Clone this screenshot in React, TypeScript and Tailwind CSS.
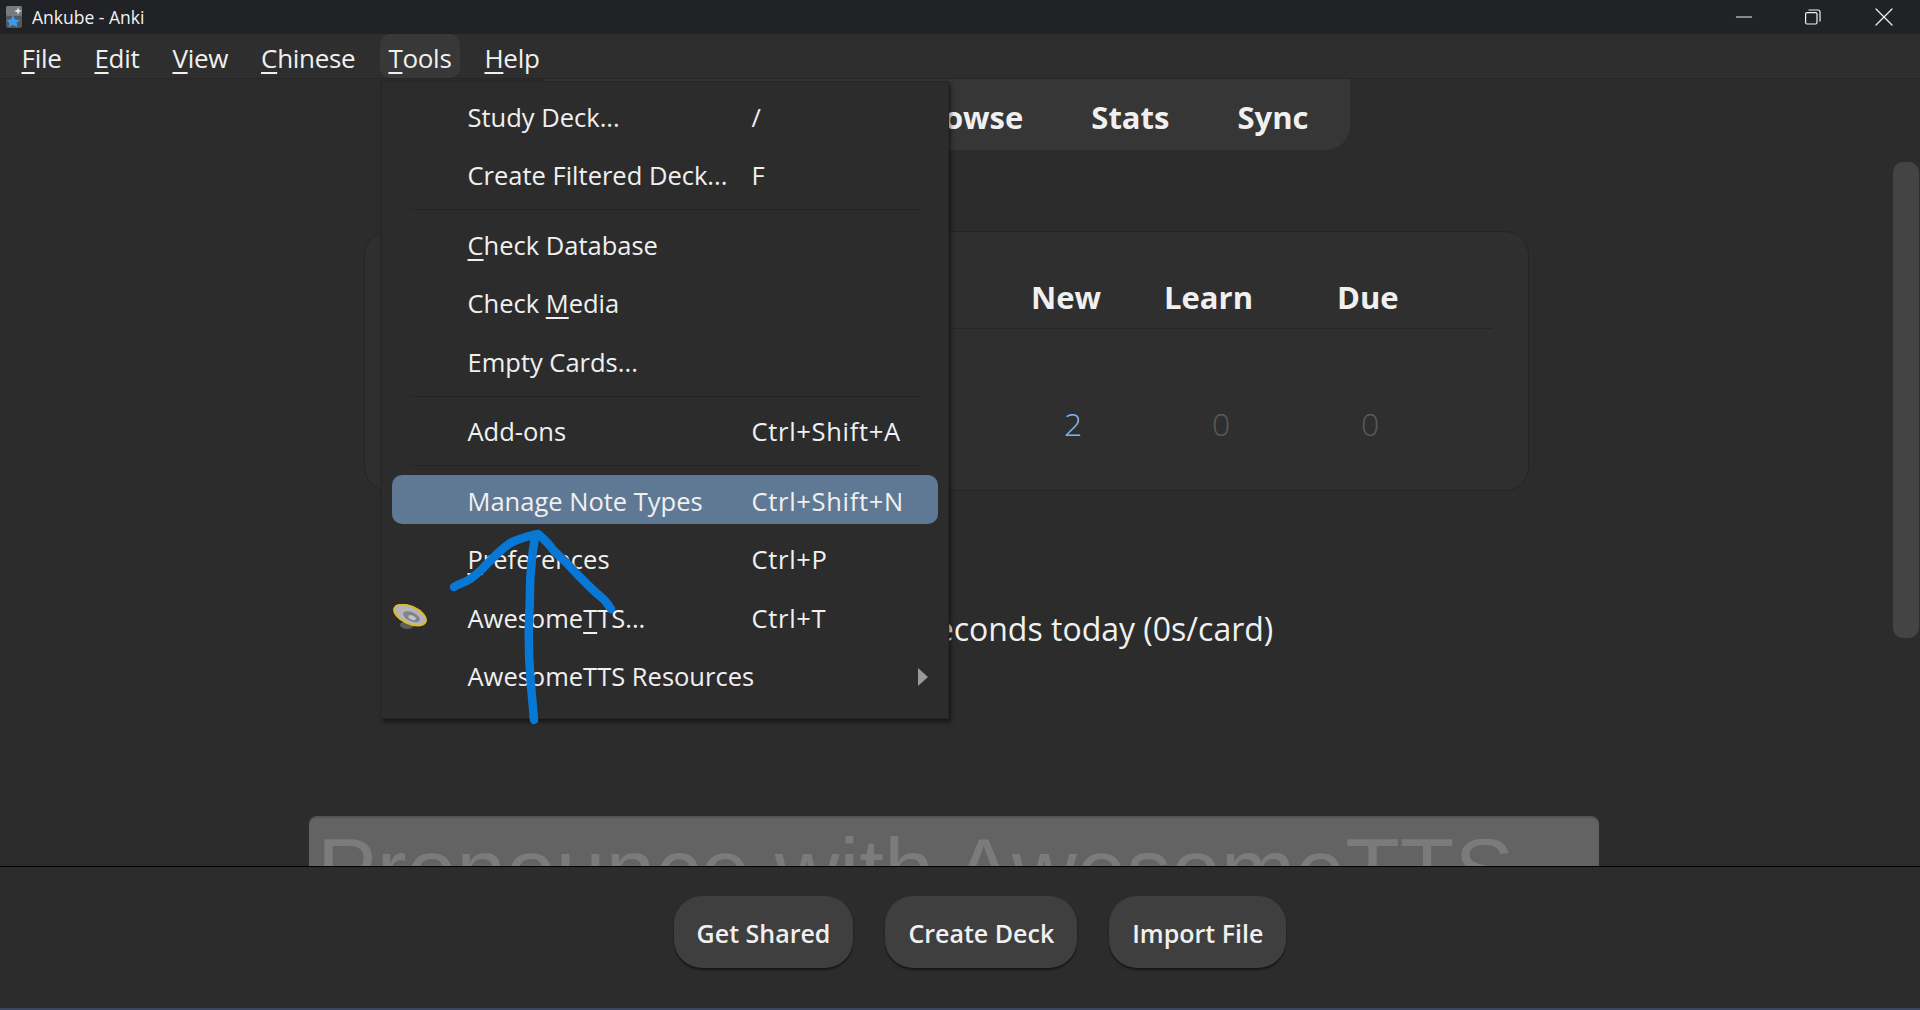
import { Minus, X } from 'lucide-react';

interface MenuRow {
  label: React.ReactNode;
  shortcut?: string;
  icon?: boolean;
  submenu?: boolean;
  active?: boolean;
}

const font = "font-['Open_Sans','Noto_Sans',sans-serif]";

function AppIcon() {
  return (
    <svg width="16" height="22" viewBox="0 0 16 22">
      <rect x="0" y="0" width="16" height="22" rx="2" fill="#55575a" />
      <rect x="0" y="0" width="16" height="10" rx="2" fill="#77797c" />
      <polygon points="7,9 9,13.5 14,14 10.5,17 11.5,21 7,19 2.5,21 3.5,17 0.5,14 5,13.5" fill="#3d9be9" />
      <polygon points="12,1 13,4 16,5 13,6 12,9 11,6 8,5 11,4" fill="#dfe6ec" />
    </svg>
  );
}

function RestoreIcon() {
  return (
    <svg width="16" height="16" viewBox="0 0 16 16" fill="none" stroke="#f2f2f2" strokeWidth="1.2">
      <rect x="0.6" y="3.6" width="11.4" height="11.4" rx="1.5" />
      <path d="M3.5 1h9.5a2 2 0 0 1 2 2v9.5" />
    </svg>
  );
}

function SpeakerIcon() {
  return (
    <svg className="mb-[3px]" width="36" height="26" viewBox="0 0 36 26">
      <ellipse cx="15" cy="21" rx="7" ry="4" fill="#5b5e5c" />
      <g transform="rotate(24 18 11)">
        <ellipse cx="18" cy="11" rx="17" ry="8.5" fill="#b4b4ba" stroke="#d8bd2e" strokeWidth="2" />
        <ellipse cx="20" cy="12" rx="9" ry="4.5" fill="#83838b" />
        <ellipse cx="21" cy="12.5" rx="4" ry="2" fill="#c2c2c8" />
      </g>
    </svg>
  );
}

function Row({ label, shortcut, icon, submenu, active }: MenuRow) {
  return (
    <div
      className={`mx-[10px] flex h-[49px] shrink-0 items-center rounded-[10px] ${
        active ? 'mt-[3px] mb-[6.5px] bg-[#5f7995] pt-[4px]' : 'my-[4.75px]'
      }`}
    >
      <div className="flex w-[75.5px] items-center">{icon && <SpeakerIcon />}</div>
      <div className="w-[284px] whitespace-nowrap">{label}</div>
      <div className="whitespace-nowrap tracking-[0.7px]">{shortcut}</div>
      {submenu && (
        <svg className="ml-auto mr-[10px]" width="10" height="18" viewBox="0 0 10 18">
          <polygon points="0,0 10,9 0,18" fill="#9a9a9a" />
        </svg>
      )}
    </div>
  );
}

function Separator() {
  return <div className="mx-[28px] mt-[4px] mb-[6px] h-[1px] shrink-0 bg-[#242424]" />;
}

function ToolsMenu() {
  return (
    <div className="absolute left-[381px] top-[81px] z-10 flex h-[638px] w-[568px] flex-col border border-[#262626] bg-[#2c2c2c] pt-[6px] text-[25.5px] leading-none text-[#f0f0f0] shadow-[2px_3px_4px_rgba(0,0,0,0.5)]">
      <Row label="Study Deck..." shortcut="/" />
      <Row label="Create Filtered Deck..." shortcut="F" />
      <Separator />
      <Row label={<><u className="underline-offset-4">C</u>heck Database</>} />
      <Row label={<>Check <u className="underline-offset-4">M</u>edia</>} />
      <Row label="Empty Cards..." />
      <Separator />
      <Row label="Add-ons" shortcut="Ctrl+Shift+A" />
      <Separator />
      <Row label="Manage Note Types" shortcut="Ctrl+Shift+N" active />
      <Row label={<><u className="underline-offset-4">P</u>references</>} shortcut="Ctrl+P" />
      <Row label={<>Awesome<u className="underline-offset-4">T</u>TS...</>} shortcut="Ctrl+T" icon />
      <Row label="AwesomeTTS Resources" submenu />
    </div>
  );
}

// the hand drawn arrow sits over the open menu
function Arrow() {
  return (
    <svg className="absolute left-0 top-0 z-20" width="1920" height="1010" fill="none" stroke="#0878d6" strokeWidth="8.5" strokeLinecap="round" strokeLinejoin="round">
      <path d="M534 720 C532 695 529 670 529 647 C528 625 530 610 530 590 C530 570 532 555 535 537" />
      <path d="M454 587 C460 583 465 583 470 579 C478 573 480 572 485 566 C495 556 502 548 512 542 C522 538 530 535 538 534 C545 540 550 545 554 551 C562 558 570 566 577 574 C585 582 592 590 600 596 C605 600 608 604 611 609" />
    </svg>
  );
}

export default function App() {
  const menus = [
    ['F', 'ile'],
    ['E', 'dit'],
    ['V', 'iew'],
    ['C', 'hinese'],
    ['T', 'ools'],
    ['H', 'elp'],
  ];

  return (
    <div className={`${font} relative flex h-[1010px] w-full flex-col overflow-hidden bg-[#2c2c2c] text-[#f0f0f0]`}>
      {/* title bar */}
      <div className="flex h-[34px] shrink-0 items-center bg-[#202226] pl-[6px]">
        <AppIcon />
        <span className="ml-[10px] text-[17.5px] text-[#f2f2f2]">Ankube - Anki</span>
        <div className="ml-auto flex items-center pb-[1px]">
          <Minus className="text-[#f2f2f2]" size={26} strokeWidth={1.1} />
          <div className="ml-[48px]"><RestoreIcon /></div>
          <X className="ml-[47px] mr-[20px] text-[#f2f2f2]" size={32} strokeWidth={0.9} />
        </div>
      </div>

      {/* menu bar */}
      <div className="flex h-[45px] shrink-0 items-stretch gap-[16px] border-b border-[#262626] bg-[#2e2e2e] pl-[13px] text-[26px] tracking-[-0.3px]">
        {menus.map(([key, rest]) => (
          <div
            key={key}
            className={`flex items-center rounded-[10px] px-[8.5px] pt-[4px] ${key === 'T' ? 'bg-[#383838]' : ''}`}
          >
            <u className="underline-offset-4">{key}</u>
            {rest}
          </div>
        ))}
      </div>

      {/* deck list */}
      <div className="relative flex min-h-0 flex-1 flex-col items-center overflow-hidden pr-[27px]">
        <div className="flex h-[71px] w-[806px] shrink-0 items-center justify-end gap-[68px] rounded-b-[24px] bg-[#363636] pr-[41px] pt-[5px] text-[31px] font-bold">
          <span>Decks</span>
          <span>Add</span>
          <span>Browse</span>
          <span>Stats</span>
          <span>Sync</span>
        </div>

        <div className="mt-[81px] h-[260px] w-[1165px] shrink-0 rounded-[24px] border border-[#242424] bg-[#2f2f2f] px-[35px]">
          <div className="flex h-[97px] items-center border-b border-[#262626] pt-[34px] text-[31px] font-bold">
            <span className="ml-[631px] w-[133px]">New</span>
            <span className="w-[173px]">Learn</span>
            <span>Due</span>
          </div>
          <div className="flex h-[111px] items-end text-[32px] font-light leading-none">
            <span className="ml-[664px] w-[148px] text-[#7fb5ec]">2</span>
            <span className="w-[149px] text-[#5a5a5a]">0</span>
            <span className="text-[#5a5a5a]">0</span>
          </div>
        </div>

        <div className="mt-[116px] text-[32px] leading-[44px]">Studied 2 cards in 2 seconds today (0s/card)</div>

        <div className="ml-[15px] mt-[165px] flex h-[120px] w-[1290px] shrink-0 justify-start rounded-[8px] border-t-2 border-[#555] bg-[#636363] pl-[8px] font-['Liberation_Sans',sans-serif] text-[89.5px] leading-[104px] text-[#7b7b7b]">
          Pronounce with AwesomeTTS
        </div>

        <div className="absolute right-[1px] top-[83px] h-[476px] w-[26px] rounded-[10px] bg-[#444444]" />
      </div>

      {/* bottom bar */}
      <div className="flex h-[142px] shrink-0 items-start justify-center gap-[32px] border-t border-black bg-[#2c2c2c] pl-[40px] pt-[29px] text-[25px] font-semibold">
        {['Get Shared', 'Create Deck', 'Import File'].map((label) => (
          <div key={label} className="flex h-[72px] items-center rounded-[28px] bg-[#3f3f3f] px-[23px] pt-[4px] shadow-[0_2px_2px_rgba(0,0,0,0.5)]">
            {label}
          </div>
        ))}
      </div>
      <div className="h-[2px] shrink-0 bg-[#3a4560]" />

      <ToolsMenu />
      <Arrow />
    </div>
  );
}
